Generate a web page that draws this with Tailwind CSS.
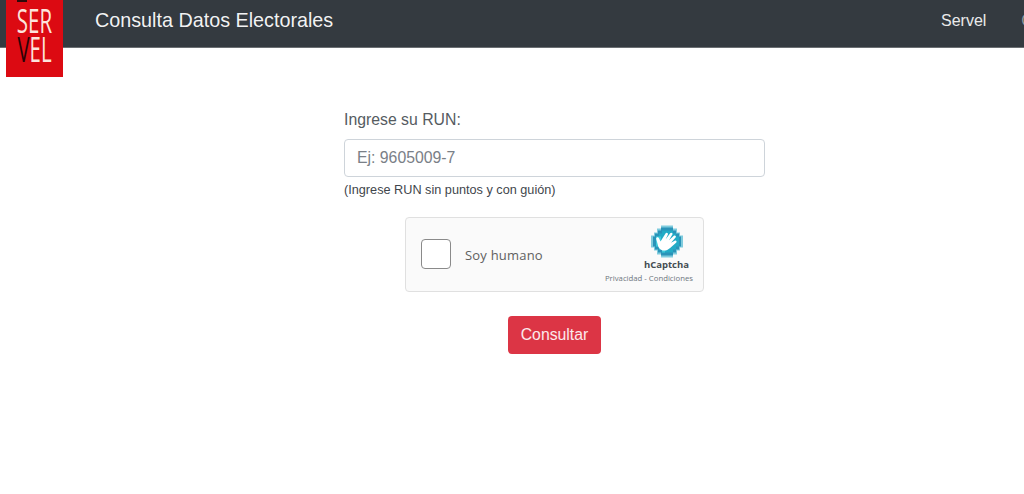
<!DOCTYPE html>
<html lang="es">
<head>
  <meta charset="UTF-8">
  <title>Consulta Datos Electorales</title>
  <script src="https://cdn.jsdelivr.net/npm/@tailwindcss/browser@4"></script>
</head>
<body class="bg-white font-['Liberation_Sans',Arial,sans-serif] text-[#495057] h-[494px] w-[1024px] overflow-hidden relative">
  <!-- Navbar -->
  <nav class="h-[48px] bg-[#343a40] border-b border-[#6b6f73] flex items-center pb-[5px] pl-[95px] overflow-hidden">
    <span class="text-[19.75px] text-white/95">Consulta Datos Electorales</span>
    <span class="ml-auto text-[16px] text-white/90 w-[83px] whitespace-nowrap overflow-hidden">Servel<span class="ml-[35px] text-[#8f979e]">Contacto</span></span>
  </nav>

  <!-- Logo -->
  <div class="absolute left-[6px] top-0 w-[57px] h-[77px] bg-[#dc0a12] overflow-hidden">
    <div class="absolute left-[11px] top-0 w-[10px] h-[2px] bg-[#2a0a0a]"></div>
    <div class="absolute left-0 right-0 top-[9px] text-center text-[#fde3dc] text-[32px] font-medium leading-[24px] scale-x-[0.64] font-['Open_Sans',sans-serif]">SER</div>
    <div class="absolute left-0 right-0 top-[37px] text-center text-[#fde3dc] text-[34px] font-medium leading-[24px] scale-x-[0.6] font-['Open_Sans',sans-serif]"><span class="text-[#2a0306]">V</span>EL</div>
  </div>

  <!-- Form -->
  <main class="w-[421px] ml-[344px] pt-[62px]">
    <label class="block text-[15.8px] leading-[20px] text-[#555b61]">Ingrese su RUN:</label>
    <input type="text" placeholder="Ej: 9605009-7" class="block mt-[9px] w-full h-[38px] px-[12px] text-[15.8px] border border-[#ced4da] rounded-[4px] bg-white placeholder:text-[#7a8087]">
    <p class="mt-[5px] text-[12.7px] leading-[16px] text-[#3f464c]">(Ingrese RUN sin puntos y con guión)</p>

    <!-- hCaptcha -->
    <div class="mt-[19px] ml-[61px] w-[299px] h-[75px] pb-[2px] bg-[#fafafa] border border-[#e0e0e0] rounded-[4px] flex items-center relative font-['Open_Sans',sans-serif]">
      <div class="ml-[15px] w-[30px] h-[30px] bg-white border border-[#8a8a8a] rounded-[4px]"></div>
      <span class="ml-[14px] mt-[5px] text-[13px] tracking-[0.2px] text-[#606060]">Soy humano</span>
      <div class="absolute right-[10px] top-[7px] w-[90px] flex flex-col items-end">
        <svg class="mr-[10px]" width="32" height="33" viewBox="0 0 32 32">
          <path fill="#7fcbdd" d="M10 0h12v3h4v4h3v3h3v12h-3v3h-3v4h-4v3H10v-3H6v-4H3v-3H0V10h3V7h3V3h4z"/>
          <path fill="#2a93b8" d="M10 2h12v3h3v3h3v3h2v10h-2v3h-3v3h-3v3H10v-3H7v-3H4v-3H2V11h2V8h3V5h3z"/>
          <path fill="#22abc6" d="M11 5h11v3h3v3h3v10h-3v3h-3v3H11v-3H8v-3H5V11h3V8h3z"/>
          <path fill="#3ec9da" d="M5 11h5v10h4v6h-3v-3H8v-3H5z"/>
          <path fill="#ffffff" d="M7 20l-1.800-6.500c-.3-1.600 2-2.400 2.700-.9l1.600 3.500L14.500 8c.7-1.400 3-.5 2.400 1.100l-2.200 4.700 4.500-6.100c1-1.300 3-.2 2.200 1.400l-3.400 5.700 4.800-4.500c1.200-1.100 2.900.4 1.800 1.700l-4.600 5.300 3.700-2.100c1.400-.8 2.600.9 1.400 2l-6 5.200c-2.300 2-4.800 3.200-7.500 2.500-3-.8-4.200-3-4.600-4.600z"/>
        </svg>
        <span class="mt-0 mr-[4px] text-[9.5px] leading-[14px] font-bold text-[#444c52]">hCaptcha</span>
        <span class="mt-[1px] text-[7.75px] leading-[10px] text-[#6f7780] whitespace-nowrap">Privacidad - Condiciones</span>
      </div>
    </div>

    <div class="flex justify-center mt-[24px]">
      <button class="w-[93px] h-[38px] bg-[#dc3545] text-white/90 text-[15.8px] rounded-[4px]">Consultar</button>
    </div>
  </main>
</body>
</html>
